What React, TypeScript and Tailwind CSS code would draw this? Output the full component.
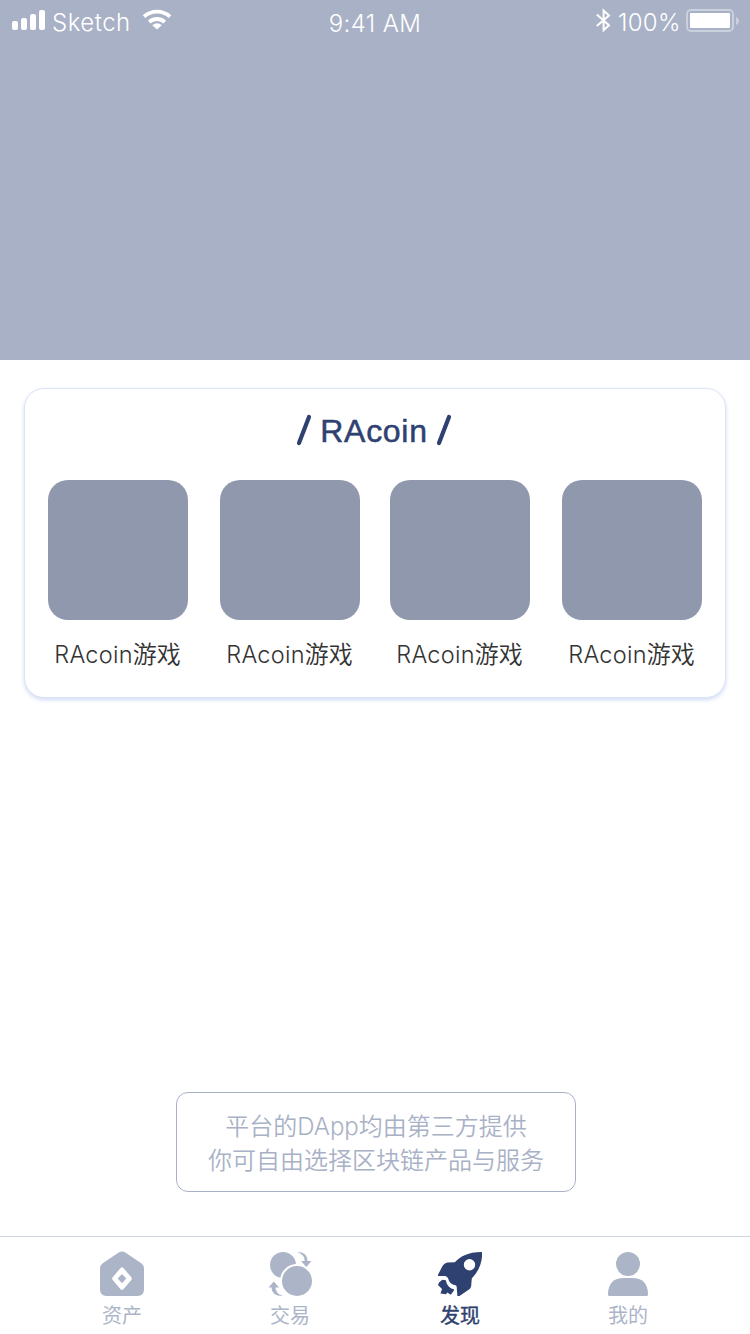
import React from "react";

const latin = "font-['Liberation_Sans','Noto_Sans_CJK_SC',sans-serif]";

function StatusBar() {
  return (
    <div className="flex h-10 items-start justify-between text-white font-['Inter',sans-serif] text-[24px] leading-[30px]">
      <div className="flex w-[250px] pl-3">
        <svg className="mt-[10px] block" width="33" height="20" viewBox="0 0 33 20" fill="currentColor">
          <rect x="0" y="11" width="6" height="9" rx="2" />
          <rect x="9" y="8" width="6" height="12" rx="2" />
          <rect x="18" y="4" width="6" height="16" rx="2" />
          <rect x="27" y="0" width="6" height="20" rx="2" />
        </svg>
        <span className="ml-[7px] mt-2 w-[79px] whitespace-nowrap font-[350] tracking-[0.5px]">Sketch</span>
        <svg className="ml-[11px] mt-[9px] block" width="30" height="21" viewBox="0 0 30 21" fill="none">
          <path d="M2 7.6C9.3 .9 20.7 .9 28 7.6" stroke="currentColor" strokeWidth="3.8" />
          <path d="M7.2 13C11.6 9 18.4 9 22.8 13" stroke="currentColor" strokeWidth="3.8" />
          <path d="M15 20.5L10.2 16.2Q15 12.4 19.8 16.2Z" fill="currentColor" />
        </svg>
      </div>
      <span className="mt-[9px] whitespace-nowrap font-[350] tracking-[0.4px]">9:41 AM</span>
      <div className="flex w-[250px] justify-end pr-[10px]">
        <svg className="mt-2 block" width="16" height="25" viewBox="0 0 16 25" fill="none" stroke="currentColor" strokeWidth="2">
          <path d="M1.8 6.5L14 17.2L8.6 22.2V2.6L14 7.4L1.8 18" />
        </svg>
        <span className="ml-[7px] mt-2 w-[63px] whitespace-nowrap font-[350] tracking-[0.3px]">100%</span>
        <svg className="ml-[5px] mt-[9px] block" width="54" height="23" viewBox="0 0 54 23">
          <rect x="1" y="1" width="46" height="21" rx="4" fill="none" stroke="white" strokeOpacity=".4" strokeWidth="2" />
          <rect x="4" y="4" width="40" height="15" rx="1" fill="white" />
          <path d="M50 8Q53 9.2 53 12T50 16Z" fill="white" fillOpacity=".4" />
        </svg>
      </div>
    </div>
  );
}

function Slash() {
  return (
    <svg className="block" width="16" height="32" viewBox="0 0 16 32">
      <path d="M13 3L3 29" stroke="#2e4170" strokeWidth="4.2" strokeLinecap="round" />
    </svg>
  );
}

function Game() {
  return (
    <div className="flex w-[140px] flex-col items-center">
      <div className="size-[140px] rounded-[20px] bg-[#9098ad]" />
      <span className="mt-[17px] -ml-[1px] whitespace-nowrap text-[24px] font-[350] leading-9 text-[#333333]"><span className="font-['Inter'] text-[23.5px] tracking-[0.25px]">RAcoin</span>游戏</span>
    </div>
  );
}

function Tab({ label, active = false, className, children }: { label: string; active?: boolean; className: string; children: React.ReactNode }) {
  return (
    <div className={`flex flex-col items-center ${active ? "text-[#2e4170]" : "text-[#acb5c8]"} ${className}`}>
      <svg className="block" width="48" height="48" viewBox="0 0 48 48" fill="currentColor">{children}</svg>
      <span className={`mt-[2px] whitespace-nowrap text-[20px] leading-8 ${active ? "[-webkit-text-stroke:0.4px_#2e4170]" : ""}`}>{label}</span>
    </div>
  );
}

export default function App() {
  return (
    <div className={`flex h-[1334px] w-[750px] flex-col overflow-hidden bg-white ${latin}`}>
      <header className="h-[360px] shrink-0 bg-[#a9b1c6]">
        <StatusBar />
      </header>
      <main className="flex flex-1 flex-col items-center pt-7">
        <section className="h-[310px] w-[702px] rounded-[20px] border border-[#dde4f6] bg-white px-[23px] shadow-[0_2px_4px_#d3dcf6]">
          <div className="flex h-[91px] items-start justify-center pr-[2px] pt-[25px]">
            <Slash />
            <h1 className="mx-2 w-[108px] whitespace-nowrap text-center text-[32px] leading-[34px] tracking-[0.7px] text-[#2e4170] [-webkit-text-stroke:0.5px_#2e4170]">RAcoin</h1>
            <Slash />
          </div>
          <div className="flex justify-between">
            <div className="flex gap-8"><Game /><Game /></div>
            <div className="flex gap-8"><Game /><Game /></div>
          </div>
        </section>
        <p className="ml-[2px] mb-11 mt-auto flex h-[100px] w-[400px] flex-col items-center justify-center rounded-[12px] border border-[#a9b1c6] pt-1 text-[24px] font-[350] leading-[34px] text-[#a9b1c6]">
          <span>平台的<span className="font-['Inter'] font-[350]">DApp</span>均由第三方提供</span>
          <span>你可自由选择区块链产品与服务</span>
        </p>
      </main>
      <nav className="flex h-[98px] shrink-0 border-t border-[#cfd6de] pl-[98px] pt-[13px]">
        <Tab label="资产" className="w-12">
          <path fillRule="evenodd" d="M20.7 2.5Q24 .3 27.3 2.5L43.6 13.5Q46 15.2 46 18V39.5Q46 46 39.5 46H8.5Q2 46 2 39.5V18Q2 15.2 4.4 13.5ZM24 17.2Q23.2 17.2 22.6 17.9L14.7 27.2Q13.7 28.6 14.7 30L22.6 39.3Q24 40.8 25.4 39.3L33.3 30Q34.3 28.6 33.3 27.2L25.4 17.9Q24.8 17.2 24 17.2ZM24 23.9L28.3 28.6L24 33.3L19.7 28.6Z" />
        </Tab>
        <Tab label="交易" className="ml-[120px] w-12">
          <circle cx="17" cy="15" r="13" />
          <circle cx="31" cy="31" r="17" fill="white" />
          <circle cx="31" cy="31" r="15" />
          <path d="M31 2Q41.5 1.8 41.5 11H45.5L40.3 17L35 11H38.7Q38.7 4.5 31 2Z" />
          <path d="M17 46Q5.5 46.2 5.5 37.5H2.5L7.8 31.5L13 37.5H9.5Q9.5 43.5 17 46Z" />
        </Tab>
        <Tab label="发现" active className="ml-[122px] w-12">
          <path fillRule="evenodd" d="M45.7 2C31.5 2.3 25.3 6 18.8 12.3L11.3 12.5Q8 13.3 6.5 16L2 24.8V26L9 26Q12 26.5 13 31Q15.5 34.8 19.5 35.2Q20.5 35.5 20.7 37L21.4 46H23.5L33.7 39Q35.6 37.2 35.3 34L35.8 28.4Q44.6 19.5 46 7V2.3ZM33.5 9A5.7 5.7 0 1 1 33.5 20.4A5.7 5.7 0 0 1 33.5 9Z" />
          <path d="M6.3 29.7L9.8 30.3Q10.5 34.5 13 36.7Q15 38.8 18 39.3L17.8 40.8L14.7 44.7L11.3 42.4L10 44.3L4.5 43.6L6 39L2 35L3 32.5Z" />
        </Tab>
        <Tab label="我的" className="ml-[120px] w-12">
          <circle cx="24" cy="14" r="12" />
          <path d="M4 44.5Q4 28 20 28H28Q44 28 44 44.5Q44 46 42.5 46H5.5Q4 46 4 44.5Z" />
        </Tab>
      </nav>
    </div>
  );
}
